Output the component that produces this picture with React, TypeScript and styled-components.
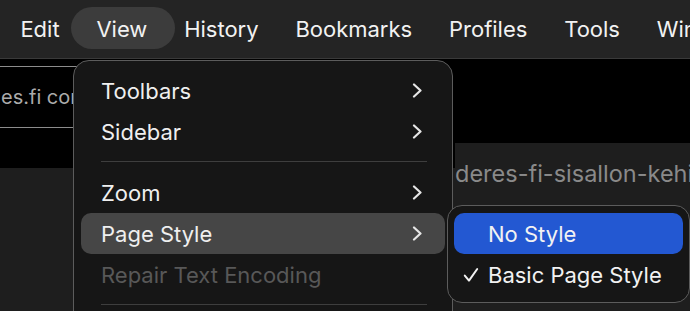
import React from "react";
import styled, { createGlobalStyle, css } from "styled-components";

const GlobalStyle = createGlobalStyle`
  html, body { margin: 0; padding: 0; background: #1e1e1e; }
  body { font-family: Inter, "Noto Sans", sans-serif; -webkit-font-smoothing: antialiased; }
`;

const Screen = styled.div`
  position: relative;
  width: 690px;
  height: 311px;
  overflow: hidden;
  background: #1e1e1e;
`;

const MenuBar = styled.div`
  display: flex;
  align-items: center;
  height: 58px;
  padding-left: 2px;
  background: #242424;
  border-bottom: 1px solid #3a3a3a;
  white-space: nowrap;
`;

const MenuTitle = styled.div<{ $active?: boolean }>`
  position: relative;
  padding: 0 18.4px;
  font-size: 22px;
  line-height: 58px;
  color: #f2f2f2;
  ${(p) =>
    p.$active &&
    css`
      &::before {
        content: "";
        position: absolute;
        top: 7px;
        bottom: 9px;
        left: -7px;
        right: -9px;
        border-radius: 21px;
        background: #3c3c3c;
      }
    `}
  & > span { position: relative; }
`;

const Page = styled.div`
  display: flex;
  height: 252px;
`;

const LeftPane = styled.div`
  width: 455px;
  display: flex;
  flex-direction: column;
`;

const LeftStrip = styled.div`
  height: 109px;
  background: #000;
  padding-top: 7px;
  box-sizing: border-box;
`;

const UrlBox = styled.div`
  height: 60px;
  margin-right: 100px;
  border-top: 1px solid #8c8c8c;
  border-bottom: 1px solid #8c8c8c;
  display: flex;
  align-items: center;
  padding-left: 1px;
  font-size: 20px;
  color: #ababab;
  white-space: nowrap;
  overflow: hidden;
`;

const RightPane = styled.div`
  flex: 1;
  display: flex;
  flex-direction: column;
  overflow: hidden;
`;

const RightStrip = styled.div`
  height: 84px;
  background: #000;
`;

const RightBody = styled.div`
  flex: 1;
  background: #1e1e1e;
  padding-top: 16px;
  font-size: 23.5px;
  color: #8a8a8a;
  white-space: nowrap;
`;

const DropMenu = styled.div`
  position: absolute;
  left: 73px;
  top: 60px;
  width: 380px;
  height: 270px;
  box-sizing: border-box;
  background: #161616;
  border: 1px solid #5c5c5c;
  border-radius: 16px;
  padding: 9px 7px;
`;

const MenuItem = styled.div<{ $highlight?: boolean; $disabled?: boolean }>`
  display: flex;
  align-items: center;
  justify-content: space-between;
  height: 41px;
  padding: 0 22px 0 20px;
  border-radius: 10px;
  font-size: 22px;
  color: ${(p) => (p.$disabled ? "#585858" : "#efefef")};
  background: ${(p) => (p.$highlight ? "#464646" : "transparent")};
  white-space: nowrap;
`;

const Separator = styled.div`
  height: 1px;
  margin: 9px 18px 10px 20px;
  background: #3e3e3e;
`;

const SubMenu = styled.div`
  position: absolute;
  left: 447px;
  top: 205px;
  width: 243px;
  height: 98px;
  box-sizing: border-box;
  background: #161616;
  border: 1px solid #5c5c5c;
  border-radius: 15px;
  padding: 7px 6px;
`;

const SubItem = styled.div<{ $selected?: boolean }>`
  display: flex;
  align-items: center;
  height: 41px;
  border-radius: 10px;
  font-size: 22px;
  color: #f2f2f2;
  background: ${(p) => (p.$selected ? "#2358d2" : "transparent")};
  white-space: nowrap;
`;

const CheckSlot = styled.div`
  width: 34px;
  padding-left: 9px;
  box-sizing: border-box;
  display: flex;
  align-items: center;
`;

const Chevron = () => (
  <svg width="11" height="15" viewBox="0 0 11 15" fill="none">
    <path d="M2 1.5 L8.5 7.5 L2 13.5" stroke="#e6e6e6" strokeWidth="2.2" strokeLinecap="round" strokeLinejoin="round" />
  </svg>
);

const Check = () => (
  <svg width="16" height="16" viewBox="0 0 16 16" fill="none">
    <path d="M1.8 8.6 L6 13.6 L14.2 2" stroke="#f2f2f2" strokeWidth="2" strokeLinecap="round" strokeLinejoin="round" />
  </svg>
);

export default function App() {
  return (
    <>
      <GlobalStyle />
      <Screen>
        <MenuBar>
          <MenuTitle><span>Edit</span></MenuTitle>
          <MenuTitle $active><span>View</span></MenuTitle>
          <MenuTitle><span>History</span></MenuTitle>
          <MenuTitle><span>Bookmarks</span></MenuTitle>
          <MenuTitle><span>Profiles</span></MenuTitle>
          <MenuTitle><span>Tools</span></MenuTitle>
          <MenuTitle><span>Window</span></MenuTitle>
        </MenuBar>
        <Page>
          <LeftPane>
            <LeftStrip>
              <UrlBox>es.fi content</UrlBox>
            </LeftStrip>
          </LeftPane>
          <RightPane>
            <RightStrip />
            <RightBody>deres-fi-sisallon-kehitys</RightBody>
          </RightPane>
        </Page>
        <DropMenu>
          <MenuItem>Toolbars<Chevron /></MenuItem>
          <MenuItem>Sidebar<Chevron /></MenuItem>
          <Separator />
          <MenuItem>Zoom<Chevron /></MenuItem>
          <MenuItem $highlight>Page Style<Chevron /></MenuItem>
          <MenuItem $disabled>Repair Text Encoding</MenuItem>
          <Separator />
        </DropMenu>
        <SubMenu>
          <SubItem $selected><CheckSlot />No Style</SubItem>
          <SubItem><CheckSlot><Check /></CheckSlot>Basic Page Style</SubItem>
        </SubMenu>
      </Screen>
    </>
  );
}
